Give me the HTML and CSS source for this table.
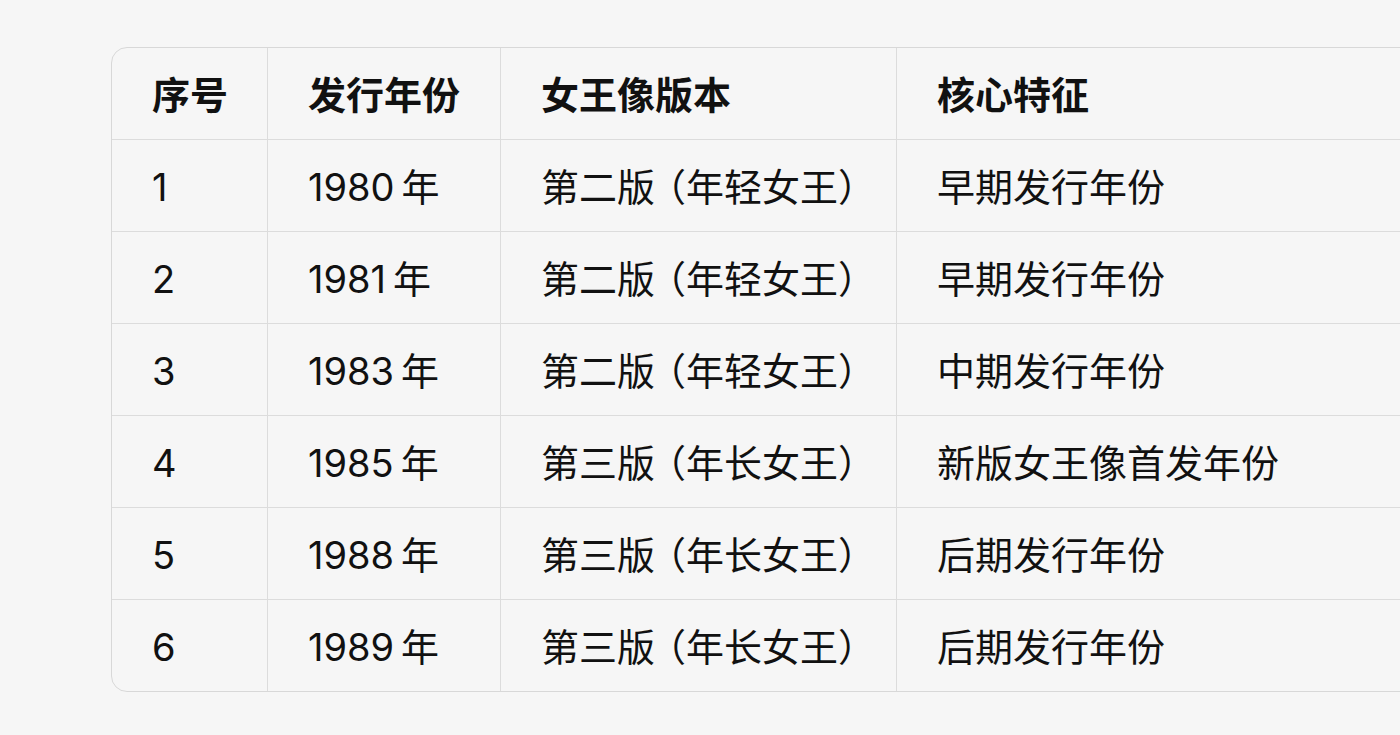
FILE: index.html
```html
<!DOCTYPE html>
<html lang="zh-CN">
<head>
<meta charset="utf-8">
<link rel="stylesheet" href="styles.css">
</head>
<body>
<div class="page">
  <div class="table-wrap">
    <table class="data">
      <colgroup>
        <col class="c1"><col class="c2"><col class="c3"><col class="c4">
      </colgroup>
      <thead>
        <tr><th>序号</th><th>发行年份</th><th>女王像版本</th><th>核心特征</th></tr>
      </thead>
      <tbody>
        <tr><td>1</td><td>1980<span class="unit">年</span></td><td>第二版<span class="po">（</span>年轻女王）</td><td>早期发行年份</td></tr>
        <tr><td>2</td><td>1981<span class="unit">年</span></td><td>第二版<span class="po">（</span>年轻女王）</td><td>早期发行年份</td></tr>
        <tr><td>3</td><td>1983<span class="unit">年</span></td><td>第二版<span class="po">（</span>年轻女王）</td><td>中期发行年份</td></tr>
        <tr><td>4</td><td>1985<span class="unit">年</span></td><td>第三版<span class="po">（</span>年长女王）</td><td>新版女王像首发年份</td></tr>
        <tr><td>5</td><td>1988<span class="unit">年</span></td><td>第三版<span class="po">（</span>年长女王）</td><td>后期发行年份</td></tr>
        <tr><td>6</td><td>1989<span class="unit">年</span></td><td>第三版<span class="po">（</span>年长女王）</td><td>后期发行年份</td></tr>
      </tbody>
    </table>
  </div>
</div>
</body>
</html>
```
FILE: styles.css
```css
html, body {
  margin: 0;
  padding: 0;
  background: #f6f6f6;
  overflow: hidden;
}
body {
  font-family: Inter, "Noto Sans CJK SC", sans-serif;
  color: #111111;
  font-variant-numeric: proportional-nums;
}
.page {
  padding: 47px 0 0 111px;
  width: 1500px;
}
.table-wrap {
  width: 1340px;
  border: 1px solid #d8d8d8;
  border-radius: 16px;
  overflow: hidden;
  background: #f6f6f6;
}
.data {
  border-collapse: separate;
  border-spacing: 0;
  width: 100%;
  table-layout: fixed;
}
.c1 { width: 156px; }
.c2 { width: 233px; }
.c3 { width: 396px; }
.data th, .data td {
  height: 88px;
  padding: 3px 0 0 40px;
  text-align: left;
  vertical-align: middle;
  font-size: 38px;
  line-height: 1;
  border-right: 1px solid #dcdcdc;
  border-bottom: 1px solid #dcdcdc;
  white-space: nowrap;
  box-sizing: content-box;
}
.data th {
  font-weight: 600;
}
.data td {
  font-weight: 400;
}
.data th:last-child, .data td:last-child {
  border-right: none;
}
.data tbody tr:last-child td {
  border-bottom: none;
}
.unit {
  margin-left: 7px;
}
.po {
  font-feature-settings: "halt" 1;
  margin-left: 12px;
}
```
